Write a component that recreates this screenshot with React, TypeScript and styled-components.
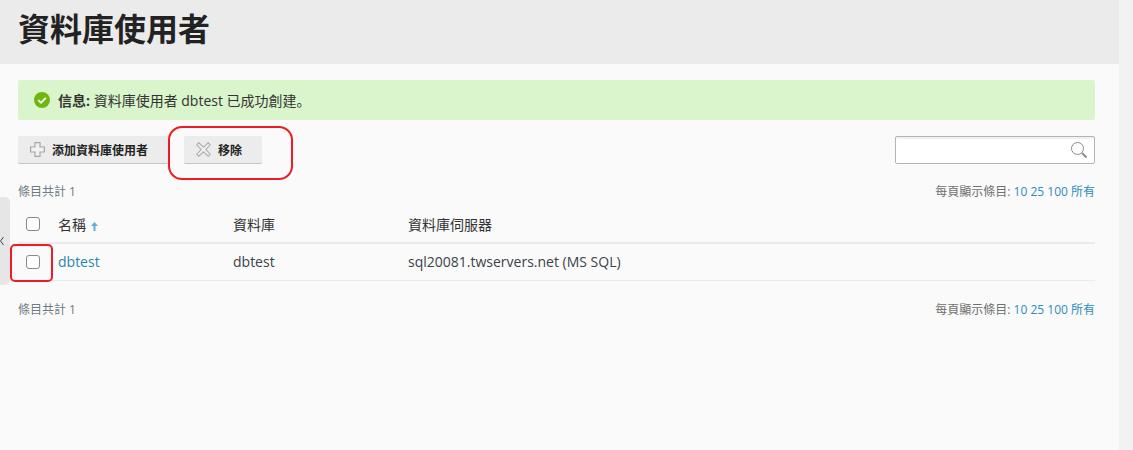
import styled, { createGlobalStyle } from "styled-components";

const GlobalStyle = createGlobalStyle`
  html, body {
    margin: 0;
    padding: 0;
    height: 450px;
    overflow: hidden;
    background: #f2f2f2;
    font-family: "Open Sans", "Noto Sans CJK SC", sans-serif;
    color: #333;
  }
`;

const Page = styled.div`
  position: relative;
  width: 1119px;
  height: 450px;
  background: #fafafa;
`;

const Header = styled.header`
  height: 64px;
  background: #ebebeb;
  padding-left: 18px;
  display: flex;
  align-items: center;
  box-sizing: border-box;

  h1 {
    margin: 0;
    font-size: 32px;
    line-height: 40px;
    font-weight: 700;
    color: #222;
    position: relative;
    top: -3px;
  }
`;

const Content = styled.main`
  padding: 16px 24px 0 18px;
`;

const Message = styled.div`
  height: 40px;
  background: #daf4cb;
  border-radius: 2px;
  display: flex;
  align-items: center;
  gap: 8px;
  padding-left: 16px;
  font-size: 14px;
  color: #333;

  b {
    font-weight: 700;
  }
`;

const Toolbar = styled.div`
  margin-top: 16px;
  display: flex;
  align-items: flex-start;
  height: 28px;
`;

const ToolButton = styled.button<{ $width: number; $gap?: number }>`
  width: ${(p) => p.$width}px;
  height: 28px;
  margin-right: ${(p) => p.$gap ?? 0}px;
  border: 0;
  border-bottom: 1px solid #c4c4c4;
  border-radius: 2px;
  background: #ececec;
  padding: 0 0 0 12px;
  display: flex;
  align-items: center;
  gap: 7px;
  font-family: inherit;
  font-size: 12px;
  font-weight: 700;
  color: #222;
`;

const SearchBox = styled.div`
  margin-left: auto;
  width: 192px;
  height: 26px;
  border: 1px solid #b4b4b4;
  border-radius: 2px;
  background: #fff;
  box-shadow: inset 0 2px 0 #f0f0f0;
  display: flex;
  align-items: center;
  justify-content: flex-end;
  padding-right: 6px;
`;

const Pager = styled.div<{ $top: number }>`
  margin-top: ${(p) => p.$top}px;
  display: flex;
  justify-content: space-between;
  align-items: center;
  height: 18px;
  font-size: 12px;
  color: #6f7a82;
`;

const PageLinks = styled.div`
  color: #6f6f6f;

  a {
    color: #2a8dba;
    text-decoration: none;
  }
`;

const Table = styled.table`
  width: 100%;
  margin-top: 9px;
  border-collapse: collapse;
  table-layout: fixed;
  font-size: 14px;
`;

const HeadCell = styled.th<{ $width?: number }>`
  width: ${(p) => (p.$width ? `${p.$width}px` : "auto")};
  height: 30px;
  padding: 0 0 3px;
  text-align: left;
  font-weight: 400;
  color: #333;
  border-bottom: 2px solid #ebebeb;
`;

const Cell = styled.td`
  height: 35px;
  padding: 0 0 1px;
  color: #3b4248;
  border-bottom: 1px solid #ebebeb;
`;

const CheckCell = styled.div`
  display: flex;
  padding-left: 8px;
`;

const Check = styled.input.attrs({ type: "checkbox" })`
  appearance: none;
  box-sizing: border-box;
  width: 14px;
  height: 14px;
  margin: 0;
  background: #fff;
  border: 1px solid #8a8a8a;
  border-radius: 3px;
`;

const NameLink = styled.a`
  color: #2a86b0;
  text-decoration: none;
`;

const SortArrow = styled.svg`
  margin-left: 5px;
  vertical-align: -1px;
`;

const SideTab = styled.div`
  position: absolute;
  left: 0;
  top: 197px;
  width: 10px;
  height: 88px;
  background: #e6e6e6;
  border-radius: 0 5px 5px 0;
  display: flex;
  align-items: center;
  overflow: hidden;
`;

const RedMark = styled.div<{ $x: number; $y: number; $w: number; $h: number; $r: number }>`
  position: absolute;
  left: ${(p) => p.$x}px;
  top: ${(p) => p.$y}px;
  width: ${(p) => p.$w}px;
  height: ${(p) => p.$h}px;
  border: 2px solid #ed1c24;
  border-radius: ${(p) => p.$r}px;
  box-sizing: border-box;
`;

function PagerRow({ top }: { top: number }) {
  return (
    <Pager $top={top}>
      <span>條目共計 1</span>
      <PageLinks>
        每頁顯示條目: <a>10</a> <a>25</a> <a>100</a> <a>所有</a>
      </PageLinks>
    </Pager>
  );
}

function App() {
  return (
    <Page>
      <GlobalStyle />
      <Header>
        <h1>資料庫使用者</h1>
      </Header>

      <Content>
        <Message>
          <svg width="16" height="16" viewBox="0 0 16 16">
            <circle cx="8" cy="8" r="8" fill="#6fb70f" />
            <path d="M4.2 8.2 7 10.8l4.8-5" fill="none" stroke="#fff" strokeWidth="1.8" />
          </svg>
          <span>
            <b>信息:</b> 資料庫使用者 dbtest 已成功創建。
          </span>
        </Message>

        <Toolbar>
          <ToolButton $width={150} $gap={16}>
            <svg width="15" height="15" viewBox="0 0 15 15">
              <path
                d="M5 .6h5v4.4h4.4v5H10v4.4H5V10H.6V5H5z"
                fill="#f2f2f2"
                stroke="#a6a6a6"
                strokeWidth="1.2"
              />
            </svg>
            添加資料庫使用者
          </ToolButton>
          <ToolButton $width={78}>
            <svg width="15" height="15" viewBox="0 0 16 16">
              <path
                d="M3 .8 8 5.6 13 .8 15.2 3 10.4 8l4.8 5-2.2 2.2L8 10.4 3 15.2.8 13l4.8-5L.8 3z"
                fill="#efefef"
                stroke="#b0b0b0"
                strokeWidth="1.2"
              />
            </svg>
            移除
          </ToolButton>
          <SearchBox>
            <svg width="18" height="18" viewBox="0 0 18 18">
              <circle cx="7.5" cy="7.5" r="6" fill="none" stroke="#8a8a8a" />
              <path d="M12 12l4.5 4.5" stroke="#8a8a8a" strokeWidth="2" />
            </svg>
          </SearchBox>
        </Toolbar>

        <PagerRow top={18} />

        <Table>
          <thead>
            <tr>
              <HeadCell $width={40}>
                <CheckCell>
                  <Check />
                </CheckCell>
              </HeadCell>
              <HeadCell $width={175}>
                名稱
                <SortArrow width="7" height="9" viewBox="0 0 7 9">
                  <path d="M3.5 0 7 4H4.5v5h-2V4H0z" fill="#5fb0d6" />
                </SortArrow>
              </HeadCell>
              <HeadCell $width={175}>資料庫</HeadCell>
              <HeadCell>資料庫伺服器</HeadCell>
            </tr>
          </thead>
          <tbody>
            <tr>
              <Cell>
                <CheckCell>
                  <Check />
                </CheckCell>
              </Cell>
              <Cell>
                <NameLink>dbtest</NameLink>
              </Cell>
              <Cell>dbtest</Cell>
              <Cell>sql20081.twservers.net (MS SQL)</Cell>
            </tr>
          </tbody>
        </Table>

        <PagerRow top={19} />
      </Content>

      <SideTab>
        <svg width="5" height="10" viewBox="0 0 5 10">
          <path d="M3.5 1 0.5 5l3 4" fill="none" stroke="#444" />
        </svg>
      </SideTab>

      <RedMark $x={168} $y={126} $w={125} $h={54} $r={14} />
      <RedMark $x={10} $y={244} $w={43} $h={38} $r={5} />
    </Page>
  );
}

export default App;
